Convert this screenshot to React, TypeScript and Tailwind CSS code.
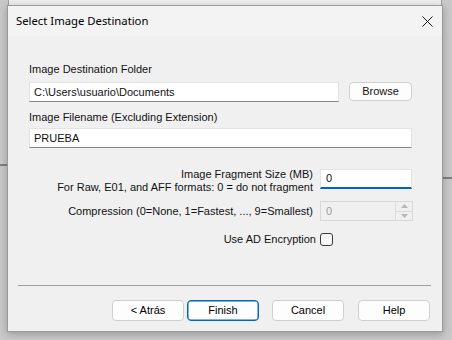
import React from 'react';

const ui = { fontFamily: '"Liberation Sans", Arial, sans-serif' };
const title = { fontFamily: '"Noto Sans", "Open Sans", sans-serif' };

const Btn: React.FC<{ label: string; primary?: boolean }> = ({ label, primary }) => (
  <button
    className={`w-[72px] h-[21px] rounded-[4px] bg-[#fdfdfd] text-[11px] text-black leading-none border ${
      primary ? 'border-[#0067c0] shadow-[inset_0_0_0_0.5px_#0067c0]' : 'border-[#d0d0d0]'
    }`}
    style={ui}
  >
    {label}
  </button>
);

export default function App() {
  return (
    <div className="relative w-[452px] h-[340px] overflow-hidden bg-[#c9c9c9]">
      {/* window behind the dialog */}
      <div className="absolute left-[8px] top-[-20px] w-[434px] h-[40px] bg-[#efefef] border-x border-[#9c9c9c]" />
      <div className="absolute left-0 top-[164px] w-[8px] h-[2px] bg-[#808080]" />
      <div className="absolute right-0 top-[177px] w-[9px] h-[2px] bg-[#808080]" />

      {/* dialog */}
      <div className="absolute left-[7px] top-[5px] w-[436px] h-[327px] bg-[#f0f0f0] border border-[#9a9a9a] shadow-[0_2px_8px_rgba(0,0,0,0.25)] flex flex-col">
        {/* title bar */}
        <div className="h-[30px] flex items-center justify-between pl-[8px] pr-[9px] bg-[#f3f3f3]">
          <span className="text-[11.3px] text-black" style={title}>Select Image Destination</span>
          <svg width="11" height="11" viewBox="0 0 11 11">
            <path d="M0.5 0.5 L10.5 10.5 M10.5 0.5 L0.5 10.5" stroke="#1a1a1a" strokeWidth="1" />
          </svg>
        </div>

        {/* body */}
        <div className="flex flex-col pl-[21px] pr-[30px] text-[11px] text-[#111]" style={ui}>
          <div className="mt-[27px] leading-[13px]">Image Destination Folder</div>
          <div className="mt-[6px] flex gap-[10px]">
            <div className="w-[310px] h-[20px] bg-white border border-[#e3e3e3] border-b-[#868686] flex items-center pl-[4px]">
              C:\Users\usuario\Documents
            </div>
            <button className="w-[63px] h-[19px] rounded-[4px] bg-[#fdfdfd] border border-[#d0d0d0] leading-none">
              Browse
            </button>
          </div>
          <div className="mt-[9px] leading-[13px]">Image Filename (Excluding Extension)</div>
          <div className="mt-[4px] w-[383px] h-[20px] bg-white border border-[#e3e3e3] border-b-[#868686] flex items-center pl-[4px]">
            PRUEBA
          </div>

          <div className="mt-[20px] flex justify-end items-start gap-[7px]">
            <div className="text-right leading-[13px]">
              <div>Image Fragment Size (MB)</div>
              <div>For Raw, E01, and AFF formats: 0 = do not fragment</div>
            </div>
            <div className="mt-[1px] w-[92px] h-[20px] bg-white border border-[#e3e3e3] border-b-2 border-b-[#0067c0] flex items-center pl-[5px]">
              0
            </div>
          </div>

          <div className="mt-[7px] flex justify-end items-center gap-[7px]">
            <div className="leading-[13px]">Compression (0=None, 1=Fastest, ..., 9=Smallest)</div>
            <div className="w-[93px] h-[20px] mr-[-1px] bg-[#f0f0f0] border border-[#d8d8d8] flex items-center justify-between pl-[5px] text-[#9a9a9a]">
              0
              <div className="w-[17px] h-full flex flex-col border-l border-[#dcdcdc]">
                <div className="flex-1 flex items-center justify-center border-b border-[#dcdcdc]">
                  <svg width="7" height="4" viewBox="0 0 7 4"><path d="M0 4 L3.5 0 L7 4 Z" fill="#b8b8b8" /></svg>
                </div>
                <div className="flex-1 flex items-center justify-center">
                  <svg width="7" height="4" viewBox="0 0 7 4"><path d="M0 0 L3.5 4 L7 0 Z" fill="#b8b8b8" /></svg>
                </div>
              </div>
            </div>
          </div>

          <div className="mt-[12px] flex justify-end items-center gap-[4px] pr-[79px]">
            <span className="leading-[13px]">Use AD Encryption</span>
            <div className="w-[13px] h-[13px] rounded-[3px] border border-[#3a3a3a] bg-[#f8f8f8]" />
          </div>
        </div>

        <div className="mt-[39px] ml-[10px] w-[413px] h-[1px] bg-[#a0a0a0]" />

        <div className="mt-[14px] flex justify-end pr-[12px]">
          <Btn label="< Atrás" />
          <div className="w-[3px]" />
          <Btn label="Finish" primary />
          <div className="w-[13px]" />
          <Btn label="Cancel" />
          <div className="w-[14px]" />
          <Btn label="Help" />
        </div>
      </div>
    </div>
  );
}
